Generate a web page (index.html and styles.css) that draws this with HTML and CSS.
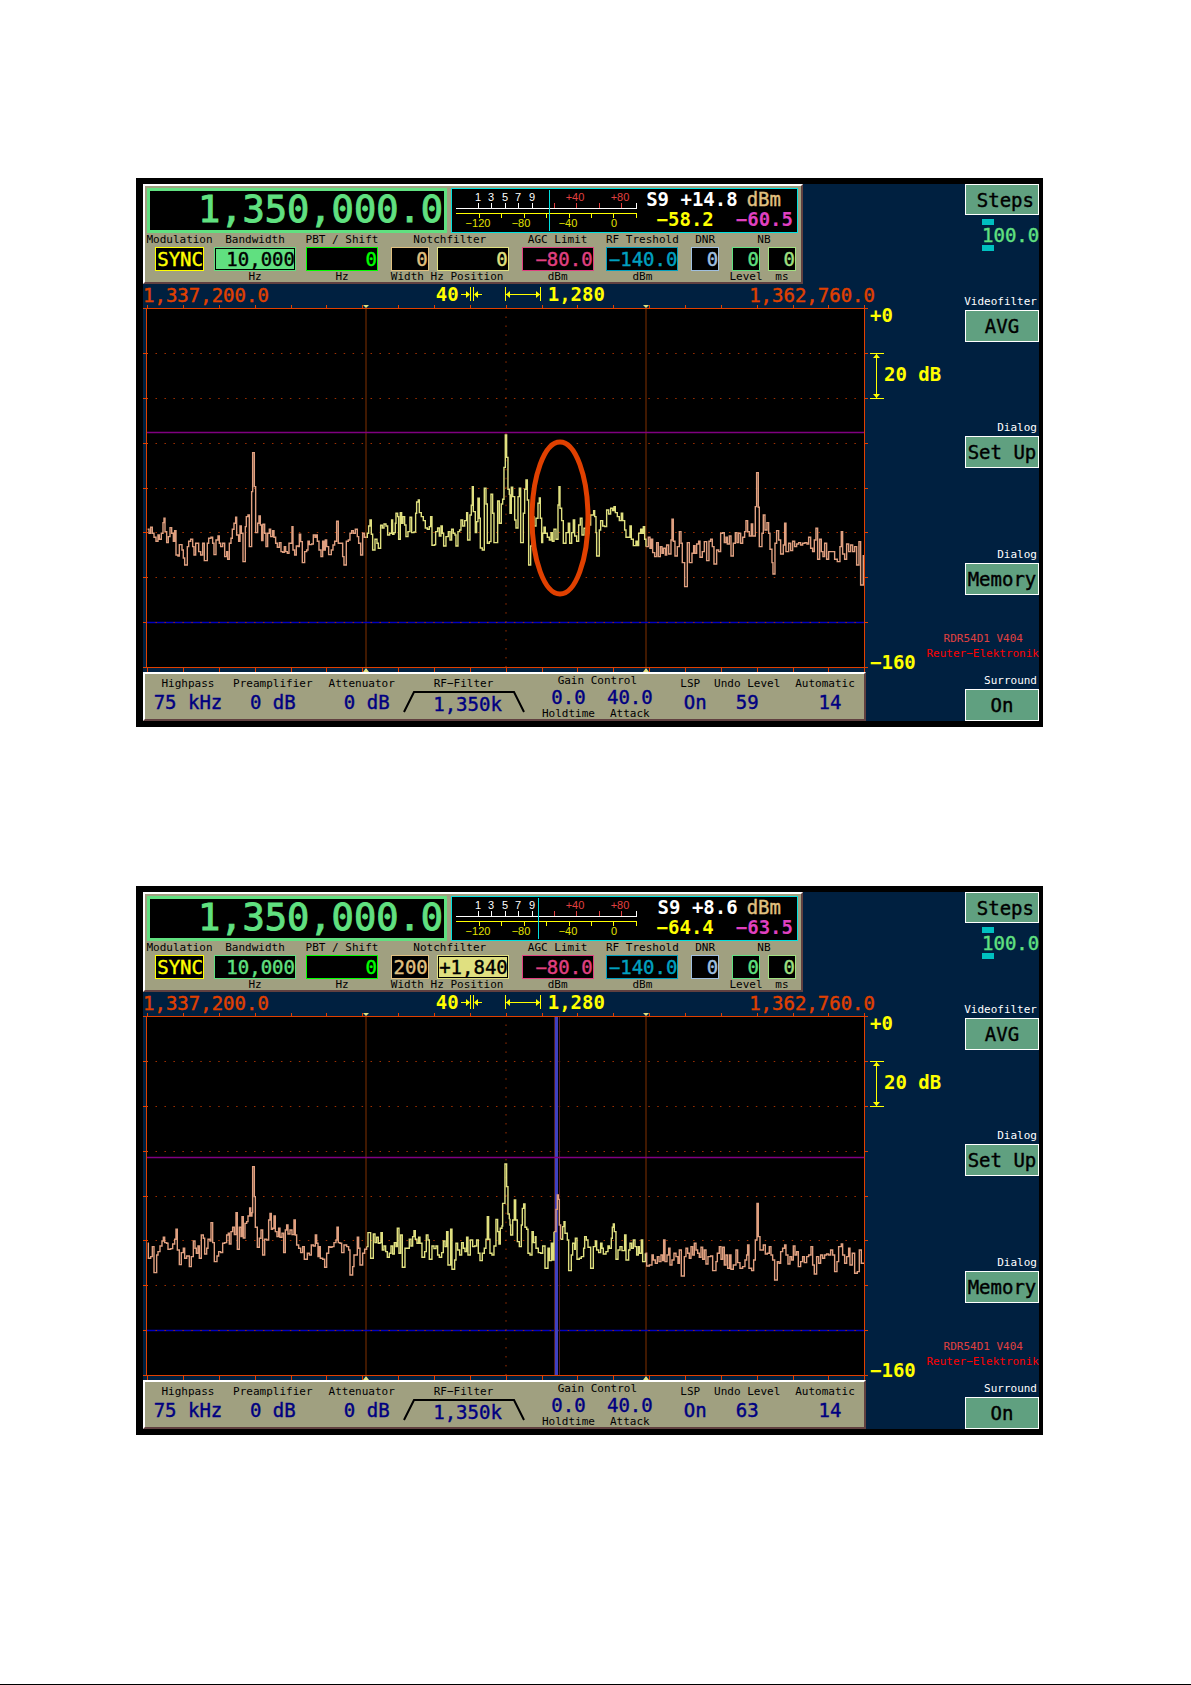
FILE: index.html
```html
<!DOCTYPE html>
<html lang="en">
<head>
    <meta charset="UTF-8">
    <meta name="viewport" content="width=device-width, initial-scale=1.0">
    <title>RDR54D1 Receiver</title>
    <link rel="stylesheet" href="styles.css">
</head>
<body>
    <!-- Receiver without notch -->
    <section class="receiver">
        <div class="main">
            <div class="panel top-panel">
                <div class="displays">
                    <div class="frequency">1,350,000.0</div>
                    <div class="meter">
                        <svg class="meter-scale" width="190" height="43">
                            <defs>
                                <g id="meter-scale">
                                    <path class="line-white" d="M4 19.5H185M26.5 14V19M39.5 14V19M53.5 14V19M66.5 14V19M80.5 14V19M184.5 14V19"/>
                                    <path class="line-red" d="M102.5 14V19M124.5 14V19M147.5 14V19M169.5 14V19"/>
                                    <path class="line-yellow" d="M4 24.5H185M27.5 24V29M49.5 24V29M72.5 24V29M94.5 24V29M117.5 24V29M139.5 24V29M161.5 24V29M184.5 24V29"/>
                                    <g class="text-white"><text x="26" y="12">1</text><text x="39" y="12">3</text><text x="53" y="12">5</text><text x="66" y="12">7</text><text x="80" y="12">9</text></g>
                                    <g class="text-red"><text x="123" y="12">+40</text><text x="168" y="12">+80</text></g>
                                    <g class="text-yellow"><text x="26" y="38">−120</text><text x="69" y="38">−80</text><text x="116" y="38">−40</text><text x="162" y="38">0</text></g>
                                </g>
                            </defs>
                            <use href="#meter-scale"/>
                            <path class="line-cyan" d="M97.5 1V42"/>
                        </svg>
                        <div class="readings">
                            <div class="reading-row signal"><b>S9 +14.8</b><span class="unit">dBm</span></div>
                            <div class="reading-row"><b class="current">−58.2</b><b class="average">−60.5</b></div>
                        </div>
                    </div>
                </div>
                <div class="fields">
                    <div class="field-group">
                        <label class="field w-mod"><span>Modulation</span><output class="yellow">SYNC</output></label>
                        <label class="field w-band"><span>Bandwidth</span><output class="green active">10,000</output><small>Hz</small></label>
                        <label class="field w-wide"><span>PBT / Shift</span><output class="lime">0</output><small>Hz</small></label>
                    </div>
                    <div class="field">
                        <span>Notchfilter</span>
                        <div class="pair"><output class="tan w-width" aria-label="Width">0</output><output class="sand w-wide" aria-label="Position">0</output></div>
                        <small class="left">Width Hz Position</small>
                    </div>
                    <label class="field w-wide"><span>AGC Limit</span><output class="pink">−80.0</output><small>dBm</small></label>
                    <label class="field w-wide"><span>RF Treshold</span><output class="teal">−140.0</output><small>dBm</small></label>
                    <label class="field w-small"><span>DNR</span><output class="blue">0</output></label>
                    <div class="field">
                        <span>NB</span>
                        <div class="pair">
                            <label class="field w-small"><output class="green">0</output><small>Level</small></label>
                            <label class="field w-small"><output class="olive">0</output><small>ms</small></label>
                        </div>
                    </div>
                </div>
            </div>

            <div class="ruler">
                <span class="from">1,337,200.0</span>
                <div class="span">
                    <b>40</b>
                    <svg class="bin" width="22" height="16">
                        <path class="line-yellow" d="M0 8.5H8M14 8.5H21M9.5 1V15M12.5 1V15"/>
                        <path class="fill-yellow" d="M5 5L9 8.5L5 12ZM17 5L13 8.5L17 12Z"/>
                    </svg>
                    <svg class="step" width="38" height="16">
                        <path class="line-yellow" d="M1.5 1V15M36.5 1V15M1 8.5H37"/>
                        <path class="fill-yellow" d="M2 8.5L6 5V12ZM36 8.5L32 5V12Z"/>
                    </svg>
                    <b>1,280</b>
                </div>
                <span class="to">1,362,760.0</span>
            </div>

            <svg class="plot" viewBox="0 0 723 368" preserveAspectRatio="none">
                <defs>
                    <g id="grid">
                        <rect x="4" y="4" width="717" height="360" fill="#000"/>
                        <path class="dots" d="M12.5 49.5H720M12.5 94.5H720M12.5 139.5H720M12.5 184.5H720M12.5 228.5H720M12.5 273.5H720M363 12.5V363"/>
                        <path class="edge" d="M223 4V364M503 4V364"/>
                        <path class="frame" d="M0 4.5H725M3.5 4V364M721.5 1V368M0 363.5H721"/>
                        <path class="frame" d="M4.5 1V4M40.5 1V4M76.5 1V4M112.5 1V4M148.5 1V4M183.5 1V4M219.5 1V4M255.5 1V4M291.5 1V4M327.5 1V4M363.5 1V4M399.5 1V4M434.5 1V4M470.5 1V4M506.5 1V4M542.5 1V4M578.5 1V4M614.5 1V4M650.5 1V4M685.5 1V4"/>
                        <path class="frame" d="M4.5 364V368M40.5 364V368M76.5 364V368M112.5 364V368M148.5 364V368M183.5 364V368M219.5 364V368M255.5 364V368M291.5 364V368M327.5 364V368M363.5 364V368M399.5 364V368M434.5 364V368M470.5 364V368M506.5 364V368M542.5 364V368M578.5 364V368M614.5 364V368M650.5 364V368M685.5 364V368"/>
                        <path class="frame" d="M0 49.5H5M0 94.5H5M0 139.5H5M0 184.5H5M0 228.5H5M0 273.5H5M0 318.5H5M721 49.5H725M721 94.5H725M721 139.5H725M721 184.5H725M721 228.5H725M721 273.5H725M721 318.5H725M721 363.5H725"/>
                        <path class="floor" d="M4 318.5H721"/>
                        <path class="dots" d="M12.5 318.5H720"/>
                        <path fill="#e0e080" d="M220 1H226L223 4ZM500 1H506L503 4ZM220 368H226L223 364ZM500 368H506L503 364Z"/>
                    </g>
                </defs>
                <use href="#grid"/>
                <path class="limit" d="M4 128.5H721"/>
                <g transform="translate(-13 96) scale(.3333)">
                    <path class="trace outer" data-levels="53 388 57 400 62 382 67 400 72 412 78 424 84 405 88 418 94 400 99 368 102 355 105 395 110 428 115 410 120 383 125 400 130 424 134 392 138 465 144 468 148 434 156 450 160 474 164 495 172 440 176 424 182 418 188 440 192 465 197 430 202 430 206 455 212 465 218 430 223 482 232 430 236 415 243 412 248 430 252 464 258 420 264 408 268 430 272 440 278 430 284 470 290 455 293 478 298 430 303 415 307 388 312 370 317 352 320 405 326 424 330 378 334 400 339 485 346 380 349 350 354 345 358 440 365 275 368 158 373 260 377 398 383 370 387 348 391 375 395 422 399 373 404 400 408 440 413 400 418 388 422 410 428 392 432 412 437 430 442 442 448 428 453 455 458 457 463 440 467 455 472 460 477 430 483 430 486 380 489 450 494 465 499 438 505 440 508 403 512 425 517 488 524 455 530 450 534 424 538 434 545 432 550 405 555 412 558 405 562 424 567 450 573 470 578 424 582 450 586 420 590 440 596 464 604 450 609 435 614 424 620 364 625 430 632 430 638 470 642 495 649 424 655 420 660 400 665 392 670 400 676 388 682 410 686 430 692 465 698 400 703 412 710 412"/>
                    <path class="trace inner" data-levels="710 412 712 400 716 378 720 360 724 403 728 450 735 418 741 430 745 445 752 376 757 384 762 372 768 378 773 405 779 400 785 360 788 403 792 398 796 370 798 340 803 350 806 418 811 338 815 370 819 350 824 375 828 410 834 395 840 352 845 398 852 396 857 340 860 306 865 300 868 338 874 350 880 362 886 384 892 388 898 380 902 350 906 436 914 434 917 395 923 384 928 408 933 378 937 400 941 438 948 410 955 395 960 420 965 388 970 400 975 405 978 438 984 395 989 390 993 360 998 378 1004 362 1010 338 1013 420 1020 345 1024 316 1027 260 1030 335 1036 398 1040 365 1044 295 1048 355 1051 444 1057 450 1063 265 1068 312 1072 430 1078 425 1083 283 1088 340 1092 428 1103 303 1108 370 1114 312 1118 298 1122 202 1126 105 1130 172 1134 268 1138 285"/>
                </g>
                <g transform="translate(337 96) scale(.3333)">
                    <path class="trace inner" data-levels="88 285 90 340 94 262 98 290 104 360 108 384 114 290 118 265 122 428 130 340 134 268 138 240 142 300 146 495 152 438 156 350 162 378 168 355 174 310 178 294 181 355 185 428 188 400 192 382 196 400 202 412 208 420 213 398 217 424 222 388 228 418 234 315 237 260 240 325 245 362 250 430 258 398 265 370 269 430 275 398 280 360 284 408 290 424 296 375 301 355 306 405 312 385 318 400 326 375 332 345 341 332 344 350 348 398 350 468 358 390 362 362 368 378 374 380 380 330 386 342 392 325 398 332 402 320 406 338 412 350 418 362 424 340 428 362 434 390 438 412 444 412 450 378 454 418 460 437 468 424 472 437 476 400 482 388 486 400 490 380 494 418 498 440"/>
                    <path class="trace outer" data-levels="498 440 505 412 510 445 514 418 518 458 524 470 530 428 535 470 541 440 546 460 550 445 556 465 560 435 566 462 573 420 576 358 580 424 585 468 592 440 598 395 603 430 607 488 614 560 622 428 628 488 636 460 641 437 645 460 650 432 656 424 660 472 667 455 673 425 680 482 687 424 692 418 697 440 702 492 710 450 716 455 722 400 728 398 733 428 738 412 742 432 748 408 753 468 760 430 766 398 771 428 776 400 782 430 788 412 794 395 798 362 803 395 808 408 814 372 818 408 826 320 830 218 835 322 838 440 846 400 850 345 855 390 861 368 866 400 870 448 876 488 879 522 885 430 890 392 896 420 902 462 910 435 914 370 918 455 926 430 932 452 938 424 944 440 950 432 956 428 962 435 968 430 975 428 981 432 986 412 992 445 998 455 1003 420 1008 385 1013 478 1019 418 1024 455 1029 470 1034 430 1040 478 1046 455 1056 455 1064 478 1072 485 1080 440 1084 395 1088 462 1094 478 1100 432 1106 455 1112 435 1118 455 1124 440 1130 495 1137 425 1142 555 1150 465"/>
                </g>
                <ellipse class="marker" cx="417" cy="214" rx="28" ry="76"/>
            </svg>

            <div class="panel bottom-panel">
                <label class="info"><span>Highpass</span><output>75 kHz</output></label>
                <label class="info"><span>Preamplifier</span><output>0 dB</output></label>
                <label class="info shift"><span>Attenuator</span><output>0 dB</output></label>
                <label class="info filter"><span>RF−Filter</span>
                    <svg width="122" height="22"><path d="M1 21L11 1H111L121 21"/></svg>
                    <output>1,350k</output>
                </label>
                <div class="info gain">
                    <span>Gain Control</span>
                    <div class="gain-pair">
                        <label class="info"><output>0.0</output><small>Holdtime</small></label>
                        <label class="info"><output>40.0</output><small>Attack</small></label>
                    </div>
                </div>
                <label class="info shift"><span>LSP</span><output>On</output></label>
                <label class="info"><span>Undo Level</span><output>59</output></label>
                <label class="info shift"><span>Automatic</span><output>14</output></label>
            </div>
        </div>

        <aside class="side">
            <div class="scale">
                <b>+0</b>
                <div class="division">
                    <svg width="14" height="46"><path class="line-yellow" d="M0 0.5H14M0 45.5H14M6.5 1V45"/><path class="fill-yellow" d="M6.5 1L10 5H3ZM6.5 45L10 41H3Z"/></svg>
                    <b>20 dB</b>
                </div>
                <b class="bottom">−160</b>
            </div>
            <div class="keys">
                <div class="key"><button class="right">Steps</button></div>
                <div class="key">
                    <div class="steps">100.0</div>
                    <span class="caption">Videofilter</span><button>AVG</button>
                </div>
                <div class="key"><span class="caption">Dialog</span><button>Set Up</button></div>
                <div class="key"><span class="caption">Dialog</span><button>Memory</button></div>
                <div class="key">
                    <div class="firmware"><span class="model">RDR54D1 V404</span><span>Reuter−Elektronik</span></div>
                    <span class="caption">Surround</span><button>On</button>
                </div>
            </div>
        </aside>
    </section>

    <!-- Receiver with notch at +1,840 Hz -->
    <section class="receiver">
        <div class="main">
            <div class="panel top-panel">
                <div class="displays">
                    <div class="frequency">1,350,000.0</div>
                    <div class="meter">
                        <svg class="meter-scale" width="190" height="43">
                            <use href="#meter-scale"/>
                            <path class="line-cyan" d="M86.5 1V42"/>
                        </svg>
                        <div class="readings">
                            <div class="reading-row signal"><b>S9 +8.6</b><span class="unit">dBm</span></div>
                            <div class="reading-row"><b class="current">−64.4</b><b class="average">−63.5</b></div>
                        </div>
                    </div>
                </div>
                <div class="fields">
                    <div class="field-group">
                        <label class="field w-mod"><span>Modulation</span><output class="yellow">SYNC</output></label>
                        <label class="field w-band"><span>Bandwidth</span><output class="green">10,000</output><small>Hz</small></label>
                        <label class="field w-wide"><span>PBT / Shift</span><output class="lime">0</output><small>Hz</small></label>
                    </div>
                    <div class="field">
                        <span>Notchfilter</span>
                        <div class="pair"><output class="tan w-width" aria-label="Width">200</output><output class="sand active w-wide" aria-label="Position">+1,840</output></div>
                        <small class="left">Width Hz Position</small>
                    </div>
                    <label class="field w-wide"><span>AGC Limit</span><output class="pink">−80.0</output><small>dBm</small></label>
                    <label class="field w-wide"><span>RF Treshold</span><output class="teal">−140.0</output><small>dBm</small></label>
                    <label class="field w-small"><span>DNR</span><output class="blue">0</output></label>
                    <div class="field">
                        <span>NB</span>
                        <div class="pair">
                            <label class="field w-small"><output class="green">0</output><small>Level</small></label>
                            <label class="field w-small"><output class="olive">0</output><small>ms</small></label>
                        </div>
                    </div>
                </div>
            </div>

            <div class="ruler">
                <span class="from">1,337,200.0</span>
                <div class="span">
                    <b>40</b>
                    <svg class="bin" width="22" height="16">
                        <path class="line-yellow" d="M0 8.5H8M14 8.5H21M9.5 1V15M12.5 1V15"/>
                        <path class="fill-yellow" d="M5 5L9 8.5L5 12ZM17 5L13 8.5L17 12Z"/>
                    </svg>
                    <svg class="step" width="38" height="16">
                        <path class="line-yellow" d="M1.5 1V15M36.5 1V15M1 8.5H37"/>
                        <path class="fill-yellow" d="M2 8.5L6 5V12ZM36 8.5L32 5V12Z"/>
                    </svg>
                    <b>1,280</b>
                </div>
                <span class="to">1,362,760.0</span>
            </div>

            <svg class="plot" viewBox="0 0 723 368" preserveAspectRatio="none">
                <use href="#grid"/>
                <path class="notch-edge" d="M411.5 5V363M416.5 5V363"/>
                <path class="notch" d="M413.5 5V363"/>
                <path class="limit" d="M4 145.5H721"/>
                <g transform="translate(-13 128) scale(.3333)">
                    <path class="trace outer" data-levels="53 310 55 355 62 350 67 320 72 398 80 345 84 335 90 318 96 303 100 292 104 308 110 310 114 328 122 326 128 312 134 298 138 268 142 330 148 374 154 338 160 325 164 355 170 348 178 380 184 350 190 303 195 325 199 340 204 318 208 355 214 285 220 295 224 342 230 325 234 298 240 303 243 248 248 308 253 365 261 348 266 335 272 338 278 310 284 308 290 285 295 280 298 312 303 275 308 262 313 284 318 218 322 328 328 262 333 290 336 230 340 294 345 250 350 245 354 228 359 204 362 228 366 218 368 80 373 170 376 262 382 322 388 295 393 270 398 345 404 298 410 300 416 240 420 220 424 268 428 265 432 228 436 275 441 290 446 265 450 292 456 280 461 338 466 270 470 255 474 282 480 270 486 284 492 240 496 285 500 315 506 325 512 338 518 320 523 358 532 340 538 345 544 315 550 318 556 285 560 310 564 350 568 320 571 355 578 358 584 382 590 340 596 320 600 322 606 320 612 308 618 300 621 262 625 308 630 310 635 338 642 315 650 320 656 330 660 405 668 380 672 345 678 345 682 292 686 325 690 375 698 340 704 328 710 320"/>
                    <path class="trace inner" data-levels="710 320 714 278 722 355 730 282 735 308 740 292 745 310 750 308 753 278 757 330 762 318 767 335 772 352 778 340 783 318 788 342 793 308 798 320 802 265 807 340 812 285 817 382 825 325 832 325 838 298 843 318 848 290 852 272 856 298 861 310 866 292 870 310 876 352 884 335 889 285 894 300 898 358 906 318 912 326 918 318 923 345 928 352 935 338 940 303 945 320 950 275 954 375 962 268 966 388 974 360 978 310 983 330 989 345 995 308 1000 325 1005 335 1010 292 1014 345 1021 300 1028 320 1034 318 1040 300 1045 340 1050 362 1057 340 1063 325 1068 298 1072 230 1076 298 1080 340 1086 345 1092 318 1098 238 1103 275 1107 312 1111 265 1116 258 1118 190 1125 72 1130 140 1134 222 1138 238"/>
                </g>
                <g transform="translate(337 128) scale(.3333)">
                    <path class="trace inner" data-levels="88 238 90 255 92 285 98 240 103 180 107 240 112 305 118 320 124 255 127 205 131 192 135 262 140 268 144 340 150 345 156 275 160 308 166 290 168 325 175 338 182 340 188 318 195 385 204 325 208 362 214 310 218 360 222 275"/>
                    <path class="trace outer" data-levels="222 275 228 208 232 165 235 178 238 255 242 298"/>
                    <path class="trace inner" data-levels="242 298 248 260 252 245 255 280 262 300 266 392 274 345 278 310 284 328 286 295 291 358 298 355 304 350 311 325 314 290 319 300 324 322 332 385 340 320 346 303 350 330 356 338 362 310 366 325 370 342 378 335 384 318 388 325 394 295 397 262 400 252 403 275 408 358 414 330 420 320 426 332 434 285 438 360 446 330 450 310 455 325 460 300 465 320 470 345 475 320 478 340 484 300 488 365 496 340"/>
                    <path class="trace outer" data-levels="496 340 500 378 508 375 516 345 520 360 526 370 532 350 537 365 543 345 548 362 551 300 555 365 561 345 566 325 570 375 576 360 582 340 588 350 594 370 598 330 604 408 613 350 618 325 623 340 628 355 633 320 638 345 643 310 648 330 653 340 658 352 663 322 668 358 673 330 678 372 684 350 692 348 698 392 708 365 712 340 718 320 723 358 728 322 733 375 738 345 743 385 749 345 753 388 760 375 768 330 773 368 780 385 788 380 795 360 800 345 803 315 807 385 815 392 821 360 826 300 831 190 835 290 840 330 846 330 850 315 856 342 862 340 868 320 873 345 878 360 884 420 892 365 897 370 902 335 908 325 914 315 918 345 924 372 930 350 935 360 940 318 945 345 950 335 955 380 962 365 968 350 973 368 980 350 986 345 993 320 998 375 1003 402 1010 350 1016 370 1022 345 1028 355 1034 345 1040 342 1046 345 1052 330 1058 345 1064 395 1071 365 1076 320 1084 312 1088 345 1094 370 1100 350 1106 325 1110 375 1117 340 1124 400 1132 395 1138 330 1144 370 1150 372"/>
                </g>
            </svg>

            <div class="panel bottom-panel">
                <label class="info"><span>Highpass</span><output>75 kHz</output></label>
                <label class="info"><span>Preamplifier</span><output>0 dB</output></label>
                <label class="info shift"><span>Attenuator</span><output>0 dB</output></label>
                <label class="info filter"><span>RF−Filter</span>
                    <svg width="122" height="22"><path d="M1 21L11 1H111L121 21"/></svg>
                    <output>1,350k</output>
                </label>
                <div class="info gain">
                    <span>Gain Control</span>
                    <div class="gain-pair">
                        <label class="info"><output>0.0</output><small>Holdtime</small></label>
                        <label class="info"><output>40.0</output><small>Attack</small></label>
                    </div>
                </div>
                <label class="info shift"><span>LSP</span><output>On</output></label>
                <label class="info"><span>Undo Level</span><output>63</output></label>
                <label class="info shift"><span>Automatic</span><output>14</output></label>
            </div>
        </div>

        <aside class="side">
            <div class="scale">
                <b>+0</b>
                <div class="division">
                    <svg width="14" height="46"><path class="line-yellow" d="M0 0.5H14M0 45.5H14M6.5 1V45"/><path class="fill-yellow" d="M6.5 1L10 5H3ZM6.5 45L10 41H3Z"/></svg>
                    <b>20 dB</b>
                </div>
                <b class="bottom">−160</b>
            </div>
            <div class="keys">
                <div class="key"><button class="right">Steps</button></div>
                <div class="key">
                    <div class="steps">100.0</div>
                    <span class="caption">Videofilter</span><button>AVG</button>
                </div>
                <div class="key"><span class="caption">Dialog</span><button>Set Up</button></div>
                <div class="key"><span class="caption">Dialog</span><button>Memory</button></div>
                <div class="key">
                    <div class="firmware"><span class="model">RDR54D1 V404</span><span>Reuter−Elektronik</span></div>
                    <span class="caption">Surround</span><button>On</button>
                </div>
            </div>
        </aside>
    </section>

    <script>
        // data-levels holds "x level" pairs, drawn as a staircase
        document.querySelectorAll('[data-levels]').forEach(function (path) {
            const n = path.dataset.levels.split(' ');
            let d = `M${n[0]} ${n[1]}`;
            for (let i = 2; i < n.length; i += 2) {
                d += `H${n[i]}V${n[i + 1]}`;
            }
            path.setAttribute('d', d);
        });
    </script>
</body>
</html>
```

FILE: styles.css
```css
* {
    box-sizing: border-box;
}

body {
    margin: 0;
    min-height: 100vh;
    padding: 178px 148px 0 136px;
    display: flex;
    flex-direction: column;
    gap: 159px;
    background-color: white;
    border-bottom: 1px solid black;
    font-family: 'DejaVu Sans Mono', monospace;
    font-size: 19px;
    line-height: 22px;
}

svg {
    display: block;
    flex-shrink: 0;
}

small {
    font-size: 11px;
    line-height: 11px;
}

/* slightly heavier than regular, lighter than bold */
output, button, .unit, .steps, .ruler > span {
    -webkit-text-stroke: 0.4px;
}

.receiver {
    display: flex;
    border: solid black;
    border-width: 6px 4px 6px 7px;
    background-color: #002040;
    white-space: nowrap;
}

.main {
    flex: 1;
    min-width: 0;
}

.panel {
    background-color: #a0a080;
    border: 2px solid;
    border-color: white #604040 #604040 white;
    color: black;
}

/* top panel */
.top-panel {
    margin-right: 63px;
    padding: 2px 3px 0 2px;
}

.displays {
    display: flex;
    gap: 4px;
    height: 45px;
}

.frequency {
    width: 300px;
    padding-right: 1px;
    border: 3px solid #60e080;
    background-color: black;
    color: #60e080;
    font-size: 37px;
    line-height: 38px;
    text-align: right;
    -webkit-text-stroke: 1px;
}

.meter {
    flex: 1;
    display: flex;
    border: 1px solid #00e0e0;
    background-color: black;
}

.meter-scale text {
    font-family: 'Liberation Sans', Arial, sans-serif;
    font-size: 11px;
    text-anchor: middle;
}

.text-white { fill: white; }
.text-red { fill: #e04040; }
.text-yellow { fill: #e0e000; }

.line-white, .line-red, .line-yellow, .line-cyan {
    fill: none;
    stroke-width: 1;
}

.line-white { stroke: white; }
.line-red { stroke: #e04040; }
.line-yellow { stroke: #ffff00; }
.line-cyan { stroke: #00e0e0; }
.fill-yellow { fill: #ffff00; }

.readings {
    flex: 1;
    display: flex;
    flex-direction: column;
    line-height: 20px;
}

.reading-row {
    display: flex;
    justify-content: flex-end;
    gap: 22px;
    padding-right: 4px;
}

.signal {
    gap: 9px;
    padding-right: 16px;
    color: white;
}

.unit { color: #e0c080; }
.current { color: #ffff00; }
.average { color: #e040c0; }

.fields {
    display: flex;
    justify-content: space-between;
    padding: 0 2px 0 8px;
}

.field-group {
    display: flex;
    gap: 10px;
}

.field {
    display: flex;
    flex-direction: column;
    align-items: center;
}

.field span {
    font-size: 11px;
    line-height: 14px;
}

.field small {
    height: 11px;
}

.field .left {
    align-self: flex-start;
}

.field output {
    height: 24px;
    border: 1px solid;
    background-color: black;
    text-align: right;
}

.field > output {
    width: 100%;
}

.field .active {
    outline: 1px solid black;
    outline-offset: -2px;
}

.pair {
    display: flex;
    gap: 8px;
}

.w-mod { width: 49px; }
.w-band { width: 82px; }
.w-wide { width: 72px; }
.w-width { width: 38px; }
.w-small { width: 28px; }

.yellow { color: #ffff00; }
.green { color: #60e080; }
.lime { color: #00ff00; }
.tan { color: #e0c080; }
.sand { color: #e0e080; }
.pink { color: #e04080; }
.teal { color: #00a0c0; }
.blue { color: #a0c0e0; }
.olive { color: #a0e080; }

.field .green.active {
    background-color: #60e080;
    border-color: #60e080;
    color: black;
}

.field .sand.active {
    background-color: #e0e080;
    border-color: #e0e080;
    color: black;
}

/* frequency ruler */
.ruler {
    display: flex;
    height: 20px;
    margin-right: -9px;
    color: #e04000;
}

.from {
    flex-basis: 40%;
}

.span {
    display: flex;
    align-items: center;
    color: #ffff00;
}

.span .bin {
    margin-left: 2px;
}

.span .step {
    margin: 0 6px 0 21px;
}

.to {
    margin-left: auto;
}

/* spectrum */
.plot {
    width: 100%;
    height: 368px;
    overflow: visible;
}

.plot path, .plot ellipse {
    vector-effect: non-scaling-stroke;
}

.frame {
    fill: none;
    stroke: #e04000;
}

.dots {
    fill: none;
    stroke: #a03000;
    stroke-dasharray: 1.5 7.46;
}

.edge {
    stroke: #401800;
    stroke-width: 2;
}

.floor {
    stroke: #0000c0;
    stroke-width: 1.5;
}

.limit {
    stroke: #800080;
    stroke-width: 1.5;
}

.trace {
    fill: none;
    stroke-width: 1.4;
}

.outer { stroke: #e0a080; }
.inner { stroke: #e0e080; }

.marker {
    fill: none;
    stroke: #e04000;
    stroke-width: 5;
}

.notch {
    stroke: #4040c0;
    stroke-width: 3;
}

.notch-edge {
    stroke: #502020;
}

/* bottom panel */
.bottom-panel {
    display: grid;
    grid-template-columns: 78fr 92fr 86fr 118fr 150fr 36fr 78fr 78fr;
    height: 49px;
    padding-left: 4px;
}

.info {
    display: flex;
    flex-direction: column;
    align-items: center;
    min-width: 0;
}

.info span {
    padding-top: 3px;
    font-size: 11px;
    line-height: 14px;
}

.info output {
    color: #000080;
}

.shift output {
    padding-left: 10px;
}

.filter svg {
    margin-bottom: -22px;
    fill: none;
    stroke: black;
    stroke-width: 2;
}

.filter output {
    padding: 2px 0 0 8px;
}

.gain > span {
    padding-top: 0;
}

.gain output {
    height: 20px;
    line-height: 18px;
}

.gain-pair {
    display: flex;
    gap: 12px;
}

/* right side */
.side {
    width: 173px;
    display: flex;
}

.scale {
    width: 58px;
    display: flex;
    flex-direction: column;
    padding: 120px 0 48px 4px;
    color: #ffff00;
}

.division {
    display: flex;
    align-items: center;
    margin-top: 27px;
}

.division b {
    padding-bottom: 4px;
}

.bottom {
    margin-top: auto;
}

.keys {
    flex: 1;
    display: grid;
    grid-template-rows: 31px repeat(4, 1fr);
}

.key {
    display: flex;
    flex-direction: column;
    align-items: flex-end;
    justify-content: flex-end;
}

button {
    width: 74px;
    height: 32px;
    padding: 0;
    border: 1px solid white;
    background-color: #60a080;
    color: black;
    font: inherit;
    cursor: pointer;
}

button.right {
    height: 31px;
    padding-right: 4px;
    text-align: right;
}

.caption {
    padding-right: 2px;
    color: white;
    font-size: 11px;
    line-height: 16px;
}

.steps {
    width: 57px;
    margin: 4px 0 auto;
    color: #60e080;
    line-height: 20px;
}

.steps::before, .steps::after {
    content: '';
    display: block;
    width: 12px;
    height: 6px;
    background-color: #00c0c0;
}

.firmware {
    display: flex;
    flex-direction: column;
    align-items: flex-end;
    margin: 36px 0 auto;
    color: #ff0000;
    font-size: 11px;
    line-height: 15px;
}

.model {
    padding-right: 16px;
    color: #e04040;
}
```
